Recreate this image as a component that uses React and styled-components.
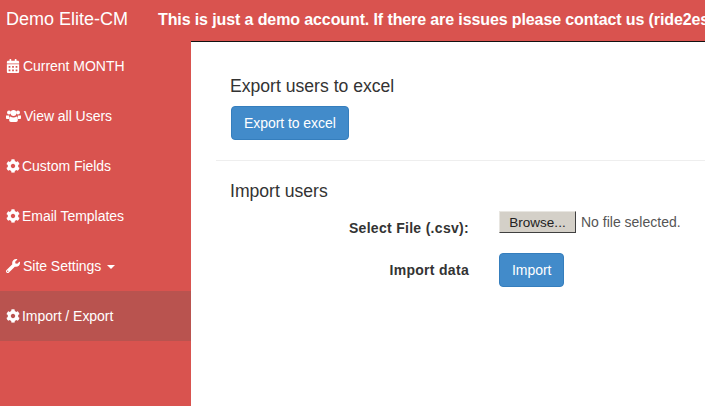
import React from "react";
import styled, { createGlobalStyle } from "styled-components";
import { FaCalendarAlt, FaCog, FaWrench } from "react-icons/fa";

const GlobalStyle = createGlobalStyle`
  html, body {
    margin: 0;
    padding: 0;
    background: #fff;
    font-family: "Liberation Sans", Arial, sans-serif;
    font-size: 14px;
    color: #333;
    overflow: hidden;
  }
  * { box-sizing: border-box; }
`;

const Page = styled.div`
  width: 705px;
  height: 406px;
  display: flex;
  flex-flow: column;
  overflow: hidden;
`;
const TopBar = styled.div`
  height: 42px;
  flex: none;
  display: flex;
  align-items: center;
  background: #d9534f;
  border-bottom: 1px solid #111;
  color: #fff;
  padding: 0 0 2px 6px;
  white-space: nowrap;
`;
const Brand = styled.div`
  width: 152px;
  flex: none;
  font-size: 18px;
`;
const Notice = styled.div`
  font-size: 16px;
  font-weight: 700;
  letter-spacing: -0.11px;
`;
const Body = styled.div`
  flex: 1;
  display: flex;
  min-height: 0;
`;
const Sidebar = styled.nav`
  width: 191px;
  flex: none;
  margin-top: -1px;
  background: #d9534f;
`;
const NavItem = styled.a`
  height: 50px;
  display: flex;
  align-items: center;
  gap: ${(p) => p.$gap}px;
  padding-left: 6px;
  color: #fff;
  font-size: 14px;
  letter-spacing: -0.03px;
  background: ${(p) => (p.$active ? "#b9534f" : "transparent")};
  svg { flex: none; font-size: 14px; }
`;
const Caret = styled.span`
  width: 0;
  height: 0;
  margin: 2px 0 0 3px;
  border-top: 4px solid #fff;
  border-left: 4px solid transparent;
  border-right: 4px solid transparent;
`;
const Main = styled.main`
  flex: 1;
  padding: 34px 0 0 25px;
  min-width: 0;
`;
const Section = styled.section`
  padding: 0 0 0 15px;
`;
const Heading = styled.h4`
  margin: 0 0 ${(p) => p.$below}px -1px;
  font-size: 17.6px;
  line-height: 20px;
  font-weight: 400;
  color: #333;
`;
const PrimaryButton = styled.button`
  height: 34px;
  padding: 0 12px;
  background: #428bca;
  border: 1px solid #357ebd;
  border-radius: 4px;
  color: #fff;
  font-family: inherit;
  font-size: 14px;
  letter-spacing: -0.06px;
`;
const Divider = styled.hr`
  margin: 20px 0 20px;
  border: 0;
  border-top: 1px solid #eee;
`;
const FormRow = styled.div`
  display: grid;
  grid-template-columns: 238px auto;
  column-gap: 30px;
  align-items: center;
  justify-content: start;
  margin-top: ${(p) => p.$top || 0}px;
`;
const Label = styled.label`
  text-align: right;
  font-weight: 700;
  font-size: 14px;
  letter-spacing: 0.3px;
  color: #333;
  transform: translateY(${(p) => p.$shift || 0}px);
`;
const FileField = styled.div`
  display: flex;
  align-items: center;
  gap: 5px;
  padding-top: 1px;
  font-size: 14px;
  color: #555;
`;
const BrowseButton = styled.button`
  width: 77px;
  height: 22px;
  padding: 0;
  background: #d4d0c8;
  border: 1px solid;
  border-color: #e8e6e1 #404040 #404040 #e8e6e1;
  color: #222;
  font-family: inherit;
  font-size: 13.5px;
`;

// the package's users icon is too flat, this one follows the three figures of the picture
function UsersIcon() {
  return (
    <svg width="15" height="14" viewBox="0 0 15 14" fill="currentColor">
      <circle cx="3" cy="3.6" r="2" />
      <circle cx="12" cy="3.6" r="2" />
      <circle cx="7.5" cy="4" r="2.9" />
      <path d="M0 6.5h3.2L3 10H1.2C.5 10 0 9.6 0 8.9zM15 6.5h-3.2l.2 3.5h1.8c.7 0 1.2-.4 1.2-1.1z" />
      <path d="M4.4 7.4c.8.7 1.9 1.1 3.1 1.1s2.3-.4 3.1-1.1c.8.1 1.2.8 1.2 2.2v1.7c0 1.1-.7 1.7-1.7 1.7H4.9c-1 0-1.7-.6-1.7-1.7V9.6c0-1.4.4-2.1 1.2-2.2z" />
    </svg>
  );
}

const navItems = [
  { icon: <FaCalendarAlt />, label: "Current MONTH", gap: 3 },
  { icon: <UsersIcon />, label: "View all Users", gap: 3 },
  { icon: <FaCog />, label: "Custom Fields", gap: 2 },
  { icon: <FaCog />, label: "Email Templates", gap: 2 },
  { icon: <FaWrench />, label: "Site Settings", gap: 3, caret: true },
  { icon: <FaCog />, label: "Import / Export", gap: 2, active: true },
];

function App() {
  return (
    <Page>
      <GlobalStyle />
      <TopBar>
        <Brand>Demo Elite-CM</Brand>
        <Notice>This is just a demo account. If there are issues please contact us (ride2es</Notice>
      </TopBar>
      <Body>
        <Sidebar>
          {navItems.map((item) => (
            <NavItem key={item.label} $active={item.active} $gap={item.gap}>
              {item.icon}
              {item.label}
              {item.caret && <Caret />}
            </NavItem>
          ))}
        </Sidebar>
        <Main>
          <Section>
            <Heading $below={10}>Export users to excel</Heading>
            <PrimaryButton type="button">Export to excel</PrimaryButton>
          </Section>
          <Divider />
          <Section>
            <Heading $below={9}>Import users</Heading>
            <FormRow>
              <Label $shift={6}>Select File (.csv):</Label>
              <FileField>
                <BrowseButton type="button">Browse...</BrowseButton>
                No file selected.
              </FileField>
            </FormRow>
            <FormRow $top={20}>
              <Label>Import data</Label>
              <div><PrimaryButton type="button">Import</PrimaryButton></div>
            </FormRow>
          </Section>
        </Main>
      </Body>
    </Page>
  );
}

export default App;
